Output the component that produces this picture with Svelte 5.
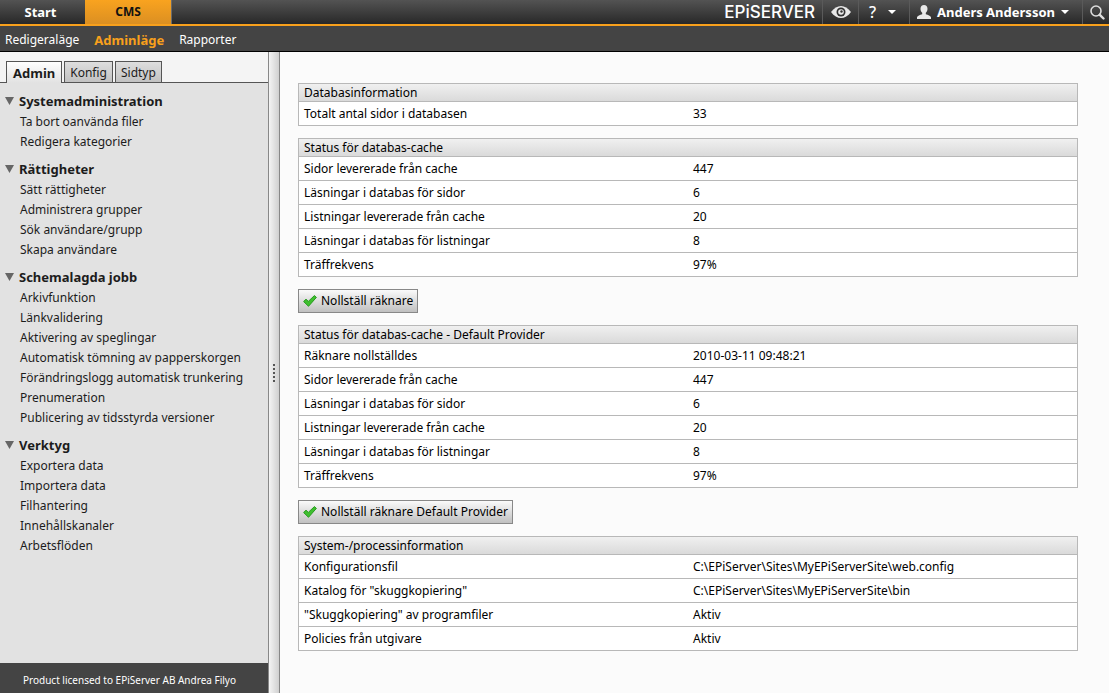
<script lang="ts">
  interface MenuGroup {
    title: string;
    items: string[];
  }

  interface InfoTable {
    title: string;
    rows: Array<[string, string]>;
    action?: string;
  }

  const GROUPS: MenuGroup[] = [
    {
      title: "Systemadministration",
      items: ["Ta bort oanvända filer", "Redigera kategorier"],
    },
    {
      title: "Rättigheter",
      items: ["Sätt rättigheter", "Administrera grupper", "Sök användare/grupp", "Skapa användare"],
    },
    {
      title: "Schemalagda jobb",
      items: [
        "Arkivfunktion",
        "Länkvalidering",
        "Aktivering av speglingar",
        "Automatisk tömning av papperskorgen",
        "Förändringslogg automatisk trunkering",
        "Prenumeration",
        "Publicering av tidsstyrda versioner",
      ],
    },
    {
      title: "Verktyg",
      items: ["Exportera data", "Importera data", "Filhantering", "Innehållskanaler", "Arbetsflöden"],
    },
  ];

  const TABLES: InfoTable[] = [
    {
      title: "Databasinformation",
      rows: [["Totalt antal sidor i databasen", "33"]],
    },
    {
      title: "Status för databas-cache",
      rows: [
        ["Sidor levererade från cache", "447"],
        ["Läsningar i databas för sidor", "6"],
        ["Listningar levererade från cache", "20"],
        ["Läsningar i databas för listningar", "8"],
        ["Träffrekvens", "97%"],
      ],
      action: "Nollställ räknare",
    },
    {
      title: "Status för databas-cache - Default Provider",
      rows: [
        ["Räknare nollställdes", "2010-03-11 09:48:21"],
        ["Sidor levererade från cache", "447"],
        ["Läsningar i databas för sidor", "6"],
        ["Listningar levererade från cache", "20"],
        ["Läsningar i databas för listningar", "8"],
        ["Träffrekvens", "97%"],
      ],
      action: "Nollställ räknare Default Provider",
    },
    {
      title: "System-/processinformation",
      rows: [
        ["Konfigurationsfil", "C:\\EPiServer\\Sites\\MyEPiServerSite\\web.config"],
        ['Katalog för "skuggkopiering"', "C:\\EPiServer\\Sites\\MyEPiServerSite\\bin"],
        ['"Skuggkopiering" av programfiler', "Aktiv"],
        ["Policies från utgivare", "Aktiv"],
      ],
    },
  ];

  const TABS = ["Admin", "Konfig", "Sidtyp"];

  let activeTab = $state("Admin");
  let closed = $state<Record<string, boolean>>({});

  function toggle(title: string) {
    closed[title] = !closed[title];
  }
</script>

<div class="page">
  <header>
    <nav class="global">
      <a class="product" href="#start">Start</a>
      <a class="product active" href="#cms">CMS</a>
      <span class="logo">EPiSERVER</span>
      <button class="tool eye" aria-label="Visa">
        <svg width="20" height="12" viewBox="0 0 20 12">
          <path d="M0 6C3 2 6.500 0 10 0s7 2 10 6c-3 4-6.500 6-10 6S3 10 0 6z" fill="#e8e8e8" />
          <circle cx="10" cy="6" r="4.500" fill="#333" />
          <circle cx="10" cy="6" r="2.800" fill="#e8e8e8" />
          <circle cx="10.500" cy="5.500" r="1.200" fill="#333" />
        </svg>
      </button>
      <button class="tool help" aria-label="Hjälp">
        <span class="question">?</span>
        <svg width="8" height="4" viewBox="0 0 8 4"><path d="M0 0h8L4 4z" fill="#fff" /></svg>
      </button>
      <button class="tool user">
        <svg width="14" height="14" viewBox="0 0 14 14">
          <path
            d="M7 0c2.200 0 3.500 1.500 3.500 3.700 0 1.700-.6 3.200-1.700 4.100v1.400c2.300.7 4.700 1.400 5.200 3V14H0v-1.800c.5-1.600 2.900-2.300 5.200-3V7.800C4.100 6.900 3.500 5.400 3.500 3.700 3.500 1.500 4.800 0 7 0z"
            fill="#e8e8e8"
          />
        </svg>
        <span>Anders Andersson</span>
        <svg width="8" height="4" viewBox="0 0 8 4"><path d="M0 0h8L4 4z" fill="#fff" /></svg>
      </button>
      <button class="tool search" aria-label="Sök">
        <svg width="15" height="15" viewBox="0 0 15 15" fill="none" stroke="#ddd">
          <circle cx="6" cy="6" r="5" stroke-width="1.600" />
          <path d="M9.800 9.800l3.700 3.700" stroke-width="2.400" stroke-linecap="round" />
        </svg>
      </button>
    </nav>
    <nav class="sub">
      <a href="#edit">Redigeraläge</a>
      <a class="active" href="#admin">Adminläge</a>
      <a href="#reports">Rapporter</a>
    </nav>
  </header>

  <div class="body">
    <aside>
      <div class="tabs" role="tablist">
        {#each TABS as tab}
          <button role="tab" class:active={tab === activeTab} aria-selected={tab === activeTab} onclick={() => (activeTab = tab)}>{tab}</button>
        {/each}
      </div>
      <div class="menu">
        {#each GROUPS as group}
          <section>
            <button class="heading" aria-expanded={!closed[group.title]} onclick={() => toggle(group.title)}>
              <svg width="9" height="8" viewBox="0 0 9 8"><path d="M0 0h9L4.500 8z" fill="#666" /></svg>
              {group.title}
            </button>
            {#if !closed[group.title]}
              <ul>
                {#each group.items as item}
                  <li><a href="#item">{item}</a></li>
                {/each}
              </ul>
            {/if}
          </section>
        {/each}
      </div>
      <footer>Product licensed to EPiServer AB Andrea Filyo</footer>
    </aside>

    <div class="splitter">
      <i></i><i></i><i></i><i></i><i></i>
    </div>

    <main>
      {#each TABLES as table}
        <table>
          <thead>
            <tr><th colspan="2">{table.title}</th></tr>
          </thead>
          <tbody>
            {#each table.rows as [label, value]}
              <tr><td>{label}</td><td>{value}</td></tr>
            {/each}
          </tbody>
        </table>
        {#if table.action}
          <button class="action">
            <svg width="14" height="12" viewBox="0 0 14 12">
              <path d="M.6 6.500L3 4.200 5.300 6.400 11.400.6l2 1.800L5.500 11.300z" fill="#3fbf2f" stroke="#269a1e" stroke-linejoin="round" />
            </svg>
            {table.action}
          </button>
        {/if}
      {/each}
    </main>
  </div>
</div>

<style>
  :global(body) {
    margin: 0;
  }
  .page {
    display: flex;
    flex-direction: column;
    min-height: 100vh;
    background: #fbfbfb;
    color: #000;
    font: 12px/16px "Noto Sans", sans-serif;
  }
  button {
    margin: 0;
    padding: 0;
    border: 0;
    background: none;
    color: inherit;
    font: inherit;
    cursor: pointer;
  }
  a {
    color: inherit;
    text-decoration: none;
  }

  .global {
    display: flex;
    height: 24px;
    border-bottom: 2px solid #f8a01c;
    background: linear-gradient(#535353, #282828);
    color: #fff;
    font-size: 13px;
    font-weight: bold;
  }
  .product {
    box-sizing: border-box;
    width: 85px;
    padding-right: 4px;
    line-height: 24px;
    text-align: center;
  }
  .product.active {
    width: 87px;
    padding: 0;
    border-right: 1px solid #6b6b6b;
    background: linear-gradient(#f9a31f, #db8f22);
    color: #111;
    font-size: 12px;
  }
  .logo {
    margin-left: auto;
    padding-right: 7px;
    font: 500 17px/24px Inter, sans-serif;
  }
  .tool {
    display: flex;
    align-items: center;
    box-sizing: border-box;
    border-left: 1px solid #5a5a5a;
  }
  .eye {
    width: 36px;
    padding-left: 8px;
  }
  .help {
    gap: 12px;
    width: 51px;
    padding-left: 10px;
  }
  .question {
    font-size: 16px;
    font-weight: 500;
  }
  .user {
    gap: 6px;
    padding: 0 13px 0 7px;
  }
  .search {
    width: 27px;
    padding-left: 7px;
  }

  .sub {
    display: flex;
    gap: 15px;
    height: 25px;
    padding-left: 5px;
    border-bottom: 1px solid #000;
    background: #444;
    color: #fff;
    line-height: 28px;
  }
  .sub .active {
    color: #f8a01c;
    font-size: 13px;
    font-weight: bold;
  }

  .body {
    display: flex;
    flex: 1;
  }
  aside {
    display: flex;
    flex-direction: column;
    width: 268px;
    background: #e2e2e2;
    color: #1c1c1c;
  }
  .tabs {
    display: flex;
    gap: 2px;
    padding: 9px 6px 0;
    border-bottom: 1px solid #555;
    background: #f4f4f4;
  }
  .tabs button {
    height: 21px;
    padding: 2px 5px 0;
    border: 1px solid #555;
    border-bottom: 0;
    background: linear-gradient(#dedede, #c2c2c2);
  }
  .tabs .active {
    height: 22px;
    margin-bottom: -1px;
    padding: 0 6px;
    background: linear-gradient(#fff, #e2e2e2);
    font-size: 13px;
    font-weight: bold;
  }
  .menu {
    flex: 1;
    padding: 7px 5px;
  }
  section {
    margin-bottom: 6px;
  }
  .heading {
    display: flex;
    align-items: center;
    gap: 5px;
    height: 22px;
    font-size: 13px;
    font-weight: bold;
  }
  ul {
    margin: 0;
    padding: 0 0 0 15px;
    list-style: none;
  }
  li {
    line-height: 20px;
  }
  footer {
    padding: 8px 0 6px 23px;
    border-top: 1px solid #444;
    background: #444;
    color: #fff;
    font-size: 10px;
  }

  .splitter {
    display: flex;
    flex-direction: column;
    align-items: center;
    justify-content: center;
    gap: 2px;
    width: 10px;
    border: 1px solid #888;
    border-width: 0 1px;
    background: linear-gradient(to right, #f4f4f4, #d0d0d0);
  }
  .splitter i {
    width: 2px;
    height: 2px;
    background: #555;
  }

  main {
    flex: 1;
    padding: 31px 31px 31px 18px;
  }
  table {
    width: 100%;
    margin-bottom: 12px;
    border: 1px solid #b8b8b8;
    border-bottom: 0;
    border-spacing: 0;
    background: #fff;
    table-layout: fixed;
  }
  th,
  td {
    height: 23px;
    padding: 0 5px;
    border-bottom: 1px solid #b8b8b8;
    text-align: left;
  }
  th {
    height: 17px;
    background: linear-gradient(#f0f0f0, #dadada);
    font-weight: normal;
  }
  .action {
    display: flex;
    align-items: center;
    gap: 4px;
    height: 24px;
    margin-bottom: 12px;
    padding: 0 4px;
    border: 1px solid #888;
    background: linear-gradient(#fafafa, #c0c0c0);
  }
</style>
